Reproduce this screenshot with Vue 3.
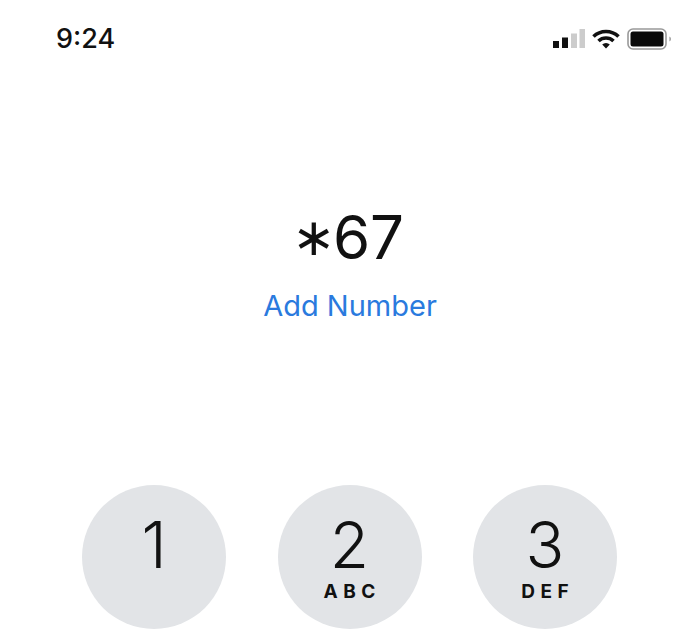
<script setup>
const keys = [
  { digit: '1', letters: '' },
  { digit: '2', letters: 'ABC' },
  { digit: '3', letters: 'DEF' },
]
</script>

<template>
  <div class="screen">
    <header class="status">
      <span class="time">9:24</span>
      <div class="icons">
        <svg class="signal" width="32" height="20" viewBox="0 0 32 20">
          <rect x="0" y="12" width="6" height="7" fill="#111" />
          <rect x="9" y="8.5" width="6" height="10.5" fill="#111" />
          <rect x="18" y="4.5" width="6" height="14.5" fill="#ccc" />
          <rect x="26.5" y="0" width="5.5" height="19" fill="#ccc" />
        </svg>
        <svg class="wifi" width="28" height="20" viewBox="0 0 28 20">
          <path d="M1.5 7.5 A18 18 0 0 1 26.5 7.5" fill="none" stroke="#111" stroke-width="3.6" />
          <path d="M6.5 12 A11 11 0 0 1 21.5 12" fill="none" stroke="#111" stroke-width="3.6" />
          <path d="M10.2 15.6 A5.5 5.5 0 0 1 17.8 15.6 L14 19.6 Z" fill="#111" />
        </svg>
        <svg class="battery" width="45" height="22" viewBox="0 0 45 22">
          <rect x="1" y="1" width="38" height="20" rx="5" fill="#fff" stroke="#999" stroke-width="1.6" />
          <rect x="3.5" y="3.5" width="33" height="15" rx="2.5" fill="#0a0a0a" />
          <path d="M42.5 8.5 A3 3 0 0 1 42.5 13.5 Z" fill="#888" />
        </svg>
      </div>
    </header>

    <main class="dial">
      <div class="number"><span class="star">∗</span>67</div>
      <div class="add">Add Number</div>
    </main>

    <section class="pad">
      <button v-for="k in keys" :key="k.digit" class="key">
        <span class="digit">{{ k.digit }}</span>
        <span class="letters">{{ k.letters }}</span>
      </button>
    </section>
  </div>
</template>

<style scoped>
.screen {
  width: 700px;
  height: 640px;
  overflow: hidden;
  background: #fff;
  font-family: Inter, "Liberation Sans", sans-serif;
  color: #111;
}
.status {
  display: flex;
  justify-content: space-between;
  align-items: center;
  padding: 24px 28px 0 56px;
  height: 30px;
}
.time {
  font-size: 27px;
  font-weight: 550;
  line-height: 30px;
}
.icons {
  display: flex;
  align-items: center;
  gap: 7px;
}
.dial {
  display: flex;
  flex-direction: column;
  align-items: center;
  padding-top: 148px;
}
.number {
  font-size: 60px;
  line-height: 70px;
  height: 70px;
  font-weight: 400;
  margin-right: 4px;
}
.star {
  font-size: 52px;
  line-height: 40px;
  margin-right: -3px;
  vertical-align: 4px;
}
.add {
  margin-top: 16px;
  font-size: 29px;
  line-height: 36px;
  color: #2a7ade;
}
.pad {
  display: flex;
  justify-content: center;
  gap: 51.5px;
  margin-top: 161px;
  padding-right: 1px;
}
.key {
  width: 144px;
  height: 144px;
  border: 0;
  border-radius: 50%;
  background: #e2e4e7;
  display: flex;
  flex-direction: column;
  align-items: center;
  padding: 24px 0 0;
  font-family: inherit;
  color: #111;
}
.digit {
  font-size: 64px;
  line-height: 72px;
  font-weight: 300;
}
.letters {
  font-size: 19px;
  line-height: 22px;
  font-weight: 700;
  letter-spacing: 5.5px;
  margin-right: -5.5px;
}
</style>
